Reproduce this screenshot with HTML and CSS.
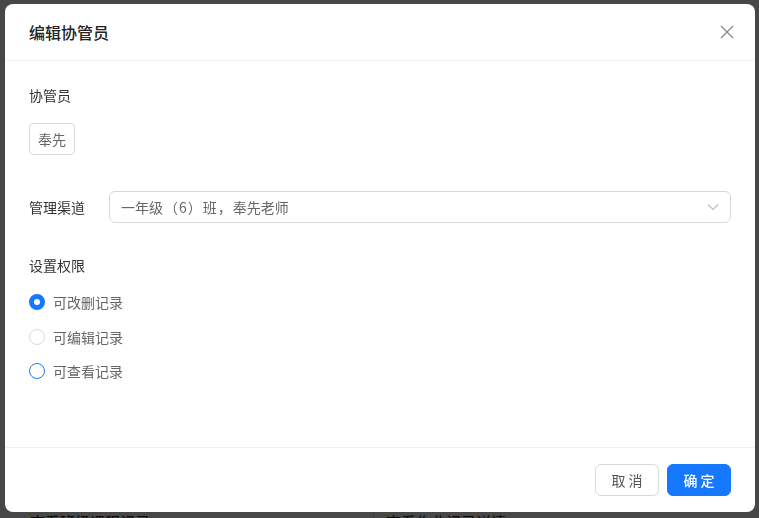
FILE: index.html
```html
<!DOCTYPE html>
<html lang="zh-CN">
<head>
    <meta charset="UTF-8">
    <meta name="viewport" content="width=device-width, initial-scale=1.0">
    <title>编辑协管员</title>
    <link rel="stylesheet" href="styles.css">
</head>
<body>

    <div class="page">
        <div class="page-col">查看班级课程记录</div>
        <div class="page-col page-col-right">查看作业记录详情</div>
    </div>

    <div class="mask">
        <div class="modal">
            <div class="modal-header">
                <span class="modal-title">编辑协管员</span>
                <button class="modal-close" aria-label="关闭">
                    <svg width="14" height="14" viewBox="0 0 14 14">
                        <path d="M1 1L13 13M13 1L1 13" stroke="#888" stroke-width="1.3" fill="none"/>
                    </svg>
                </button>
            </div>

            <div class="modal-body">
                <div class="field-label">协管员</div>
                <div class="tags">
                    <span class="tag">奉先</span>
                </div>

                <div class="form-row">
                    <label class="row-label">管理渠道</label>
                    <div class="select">
                        <span class="select-value">一年级<span class="punct">（</span>6<span class="punct">）</span>班<span class="punct">，</span>奉先老师</span>
                        <svg class="select-arrow" width="12" height="12" viewBox="0 0 12 12">
                            <path d="M1 3.5L6 8.5L11 3.5" stroke="#bbb" stroke-width="1.1" fill="none"/>
                        </svg>
                    </div>
                </div>

                <div class="field-label">设置权限</div>
                <div class="radio-group">
                    <label class="radio">
                        <span class="radio-dot checked"></span>
                        <span class="radio-text">可改删记录</span>
                    </label>
                    <label class="radio">
                        <span class="radio-dot disabled"></span>
                        <span class="radio-text">可编辑记录</span>
                    </label>
                    <label class="radio">
                        <span class="radio-dot active"></span>
                        <span class="radio-text">可查看记录</span>
                    </label>
                </div>
            </div>

            <div class="modal-footer">
                <button class="btn">取 消</button>
                <button class="btn btn-primary">确 定</button>
            </div>
        </div>
    </div>

</body>
</html>
```

FILE: styles.css
```css
* {
    box-sizing: border-box;
}

body {
    margin: 0;
    font-family: "Noto Sans CJK SC", "Noto Sans", sans-serif;
    font-size: 14px;
    color: #333;
    background: #fff;
    height: 518px;
    overflow: hidden;
}

/* page behind the mask */
.page {
    display: flex;
    padding-top: 511px;
}

.page-col {
    width: 373px;
    padding-left: 30px;
    font-size: 15px;
    line-height: 22px;
    color: #222;
}

.page-col-right {
    border-left: 1px solid #ddd;
    padding-left: 12px;
}

.mask {
    position: fixed;
    inset: 0;
    background: rgba(0, 0, 0, 0.72);
    padding: 4px 0 0 5px;
}

.modal {
    width: 750px;
    height: 508px;
    background: #fff;
    border-radius: 8px;
    display: flex;
    flex-direction: column;
}

.modal-header {
    height: 57px;
    padding: 0 24px;
    display: flex;
    align-items: center;
    justify-content: space-between;
    border-bottom: 1px solid #f0f0f0;
}

.modal-title {
    font-size: 16px;
    font-weight: 500;
    color: #222;
}

.modal-close {
    border: none;
    background: none;
    padding: 0;
    margin-right: -3px;
    width: 14px;
    height: 14px;
    display: flex;
    cursor: pointer;
}

.modal-body {
    flex: 1;
    padding: 23px 24px 0;
}

.field-label {
    line-height: 22px;
    color: #333;
}

.tags {
    margin-top: 17px;
    display: flex;
}

.tag {
    height: 32px;
    padding: 0 8px;
    border: 1px solid #d9d9d9;
    border-radius: 4px;
    display: flex;
    align-items: center;
    color: #666;
}

.form-row {
    margin: 36px 0 31px;
    display: flex;
    align-items: center;
}

.row-label {
    width: 80px;
    color: #333;
}

.select {
    flex: 1;
    height: 32px;
    border: 1px solid #d9d9d9;
    border-radius: 6px;
    padding: 0 11px;
    display: flex;
    align-items: center;
    justify-content: space-between;
}

.select-value {
    color: #666;
}

.punct {
    display: inline-block;
    width: 14px;
    text-align: center;
    margin: 0 1px;
}

.radio-group {
    margin-top: 9px;
    display: flex;
    flex-direction: column;
}

.radio {
    height: 34.5px;
    display: flex;
    align-items: center;
    gap: 8px;
}

.radio-dot {
    width: 16px;
    height: 16px;
    border-radius: 50%;
    border: 1px solid #d9d9d9;
    background: #fff;
}

.radio-dot.checked {
    border: 5px solid #1677ff;
}

.radio-dot.active {
    border-color: #1677ff;
}

.radio-text {
    color: #666;
}

.modal-footer {
    height: 65px;
    border-top: 1px solid #f0f0f0;
    padding: 0 24px;
    display: flex;
    align-items: center;
    justify-content: flex-end;
    gap: 8px;
}

.btn {
    width: 64px;
    height: 32px;
    border: 1px solid #d9d9d9;
    border-radius: 6px;
    background: #fff;
    color: #555;
    font-family: inherit;
    font-size: 14px;
}

.btn-primary {
    background: #1677ff;
    border-color: #1677ff;
    color: #fff;
    font-weight: 500;
}
```
